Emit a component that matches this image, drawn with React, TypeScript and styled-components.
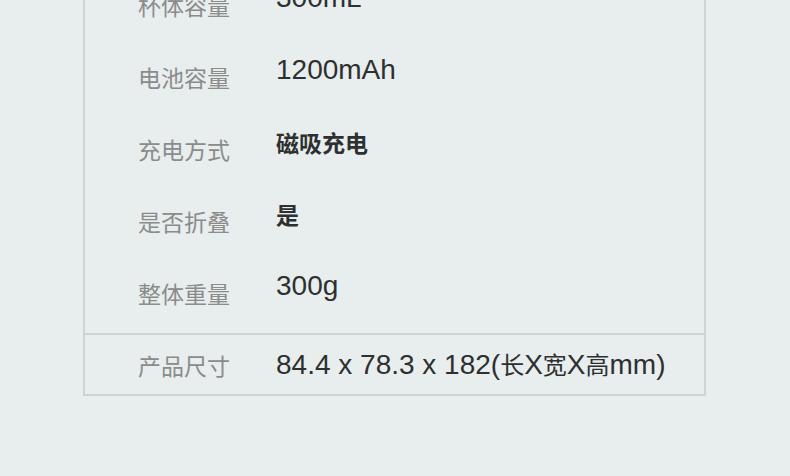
import styled, { createGlobalStyle } from "styled-components";

const GlobalStyle = createGlobalStyle`
  html, body {
    margin: 0;
    padding: 0;
    background: #e8eded;
  }
  body {
    font-family: "Liberation Sans", "Noto Sans CJK SC", sans-serif;
    overflow: hidden;
  }
`;

const SpecTable = styled.section`
  width: 619px;
  margin: -30px 0 0 83px;
  border: 2px solid #cdd4d4;
  border-top: none;
  background: #e8eded;
`;

const SpecRow = styled.div<{ $last?: boolean }>`
  display: flex;
  align-items: ${({ $last }) => ($last ? "center" : "flex-start")};
  height: ${({ $last }) => ($last ? "59px" : "72px")};
  padding-left: 53px;
  border-top: ${({ $last }) => ($last ? "2px solid #cdd4d4" : "none")};
  margin-top: ${({ $last }) => ($last ? "3px" : "0")};
`;

const Label = styled.div<{ $last?: boolean }>`
  width: 138px;
  flex-shrink: 0;
  font-family: "Noto Sans CJK SC", sans-serif;
  font-size: 23px;
  line-height: 30px;
  color: #8a8c8c;
  padding-top: ${({ $last }) => ($last ? "1px" : "20px")};
`;

const Value = styled.div<{ $bold?: boolean; $cjk?: boolean; $last?: boolean }>`
  font-family: ${({ $cjk }) =>
    $cjk ? '"Noto Sans CJK SC", sans-serif' : '"Liberation Sans", "Noto Sans CJK SC", sans-serif'};
  font-size: ${({ $cjk }) => ($cjk ? "23px" : "28px")};
  font-weight: ${({ $bold }) => ($bold ? 700 : 400)};
  line-height: 30px;
  color: #2e3030;
  padding-top: ${({ $last }) => ($last ? "0" : "13px")};
  white-space: nowrap;
`;

const Cjk = styled.span`
  font-family: "Noto Sans CJK SC", sans-serif;
  font-size: 24px;
`;

type Spec = { label: string; value: string; cjk?: boolean };

const specs: Spec[] = [
  { label: "杯体容量", value: "300mL" },
  { label: "电池容量", value: "1200mAh" },
  { label: "充电方式", value: "磁吸充电", cjk: true },
  { label: "是否折叠", value: "是", cjk: true },
  { label: "整体重量", value: "300g" },
];

export default function App() {
  return (
    <>
      <GlobalStyle />
      <SpecTable>
        {specs.map((s) => (
          <SpecRow key={s.label}>
            <Label>{s.label}</Label>
            <Value $cjk={s.cjk} $bold={s.cjk}>
              {s.value}
            </Value>
          </SpecRow>
        ))}
        <SpecRow $last>
          <Label $last>产品尺寸</Label>
          <Value $last>
            84.4 x 78.3 x 182(<Cjk>长</Cjk>X<Cjk>宽</Cjk>X<Cjk>高</Cjk>mm)
          </Value>
        </SpecRow>
      </SpecTable>
    </>
  );
}
